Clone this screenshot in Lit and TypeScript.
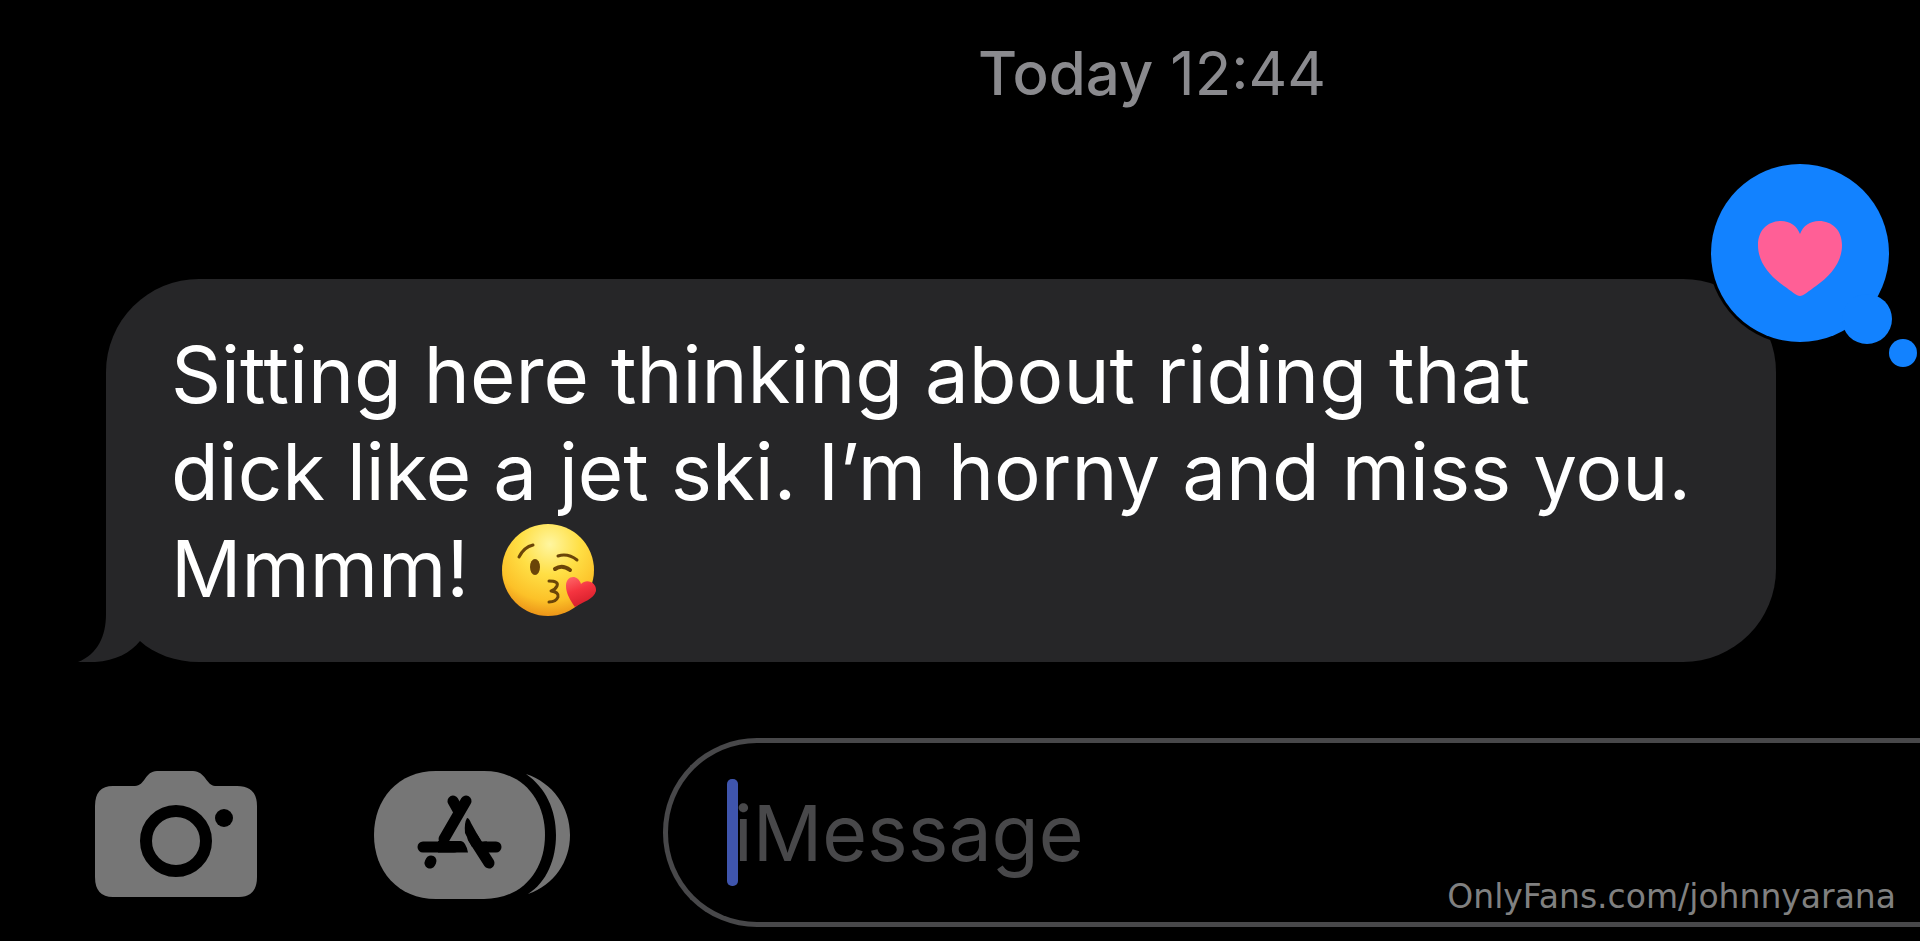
import { LitElement, html, css, svg } from "lit";
import { customElement, property } from "lit/decorators.js";

const kissFace = svg`
  <defs>
    <radialGradient id="skin" cx="52%" cy="22%" r="82%">
      <stop offset="0" stop-color="#fff6a0" />
      <stop offset="0.4" stop-color="#ffdf45" />
      <stop offset="0.75" stop-color="#fcc128" />
      <stop offset="1" stop-color="#e88a14" />
    </radialGradient>
    <linearGradient id="love" x1="0" y1="0" x2="0.4" y2="1">
      <stop offset="0" stop-color="#ff6a6a" />
      <stop offset="0.5" stop-color="#f5343f" />
      <stop offset="1" stop-color="#d81f2c" />
    </linearGradient>
  </defs>
  <circle cx="47" cy="47" r="46" fill="url(#skin)" />
  <g fill="none" stroke="#6b4508" stroke-width="3" stroke-linecap="round" stroke-linejoin="round">
    <path d="M18 34 Q23 24 32 22" />
    <path d="M57 33 Q67 30 76 37" />
    <path stroke-width="4" d="M54 46 Q61 41 69 47" />
    <path d="M48 58 Q58 58 56 63 Q54 67 50 68 Q58 69 57 74 Q55 79 48 79" />
  </g>
  <ellipse cx="34" cy="44" rx="5" ry="8" fill="#6b4508" />
  <path fill="url(#love)" d="M74 84C69 77 65 70 65 63C65 52 77 51 80 61C86 55 96 60 95 68C93 76 82 79 74 84Z" />
`;

@customElement("message-bubble")
export class MessageBubble extends LitElement {
  @property() text = "";

  static styles = css`
    :host {
      display: block;
      position: relative;
      background: #262628;
      border-radius: 93px 93px 93px 0;
      padding: 47px 80px 45px 65px;
    }
    .text {
      margin: 0;
      color: #fff;
      font: 400 78px/97px Inter, "Liberation Sans", sans-serif;
    }
    .emoji {
      display: inline-block;
      width: 96px;
      height: 94px;
      margin-left: 10px;
      vertical-align: -20px;
    }
    .tail {
      position: absolute;
      left: -28px;
      bottom: 0;
      width: 128px;
      height: 60px;
    }
    .reaction {
      position: absolute;
      right: -144px;
      top: -120px;
      width: 214px;
      height: 214px;
    }
  `;

  render() {
    return html`
      <p class="text">${this.text}
        <svg class="emoji" viewBox="0 0 96 94" role="img" aria-label="😘">${kissFace}</svg></p>
      <svg class="tail" viewBox="0 0 128 60" aria-hidden="true">
        <path fill="#000" d="M0 0H128V60H0Z" />
        <path fill="#262628" d="M28 0H128V60H121C98 60 76 52 62 39C50 54 30 62 0 60C20 52 28 34 28 12Z" />
      </svg>
      <svg class="reaction" viewBox="0 0 214 214" role="img" aria-label="Loved">
        <circle cx="94" cy="94" r="92" fill="#000" />
        <g fill="#1282ff">
          <circle cx="94" cy="94" r="89" />
          <circle cx="161" cy="160" r="25" />
          <circle cx="197" cy="194" r="14" />
        </g>
        <path
          fill="#ff5f96"
          d="M94 137C91 137 85 132 78 127C64 117 52 104 52 86C52 71 62 62 75 62C84 62 91 67 94 75C97 67 104 62 113 62C126 62 136 71 136 86C136 104 124 117 110 127C103 132 97 137 94 137Z"
        />
      </svg>
    `;
  }
}

@customElement("message-composer")
export class MessageComposer extends LitElement {
  static styles = css`
    :host {
      display: flex;
      align-items: center;
      padding-left: 95px;
    }
    .tool {
      flex: none;
      padding: 4px 0 0;
      border: 0;
      background: none;
      line-height: 0;
    }
    .camera {
      width: 162px;
      margin-right: 117px;
    }
    .apps {
      width: 197px;
      margin-right: 92px;
    }
    .field {
      flex: 1;
      min-width: 0;
      position: relative;
    }
    .input {
      display: block;
      box-sizing: border-box;
      width: 100%;
      height: 189px;
      padding: 0 0 0 66px;
      border: 5px solid #48484a;
      border-right: 0;
      border-radius: 94px 0 0 94px;
      background: transparent;
      color: #fff;
      outline: none;
      font: 400 77px/97px Inter, "Liberation Sans", sans-serif;
    }
    .input::placeholder {
      color: #48484a;
      opacity: 1;
    }
    .caret {
      position: absolute;
      left: 64px;
      top: 41px;
      width: 11px;
      height: 107px;
      border-radius: 5px;
      background: #3f55ad;
    }
  `;

  render() {
    return html`
      <button class="tool camera" type="button" aria-label="Camera">
        <svg width="162" height="128" viewBox="0 0 162 128">
          <path
            fill="#767676"
            d="M18 15H40C50 15 50 0 62 0H98C110 0 112 15 120 15H142Q162 15 162 35V106Q162 126 144 126H18Q0 126 0 106V35Q0 15 18 15Z"
          />
          <circle cx="81" cy="70" r="30" fill="none" stroke="#000" stroke-width="12" />
          <circle cx="129" cy="47" r="9" fill="#000" />
        </svg>
      </button>
      <button class="tool apps" type="button" aria-label="Apps">
        <svg width="197" height="128" viewBox="0 0 197 128">
          <path
            fill="#767676"
            d="M62 0H110C148 0 171 28 171 64S148 128 110 128H62C24 128 0 100 0 64S24 0 62 0Z"
          />
          <path fill="#767676" d="M152 3C179 12 196 36 196 64C196 91 180 114 154 123C173 111 182 88 182 64C182 39 172 17 152 3Z" />
          <g fill="none" stroke="#000" stroke-width="11" stroke-linecap="round">
            <path d="M92 30L70 68" />
            <path d="M79 30L84 39" />
            <path d="M49 76H80" />
            <path d="M111 76H122" />
            <path d="M57 90L56 92" />
            <path d="M99 67L115 92" />
          </g>
          <path fill="#000" d="M64 70H87Q92 71 94 81.500H64ZM93 47Q95 47 97 52L107 70L98 76L91 62Q90 52 93 47ZM104 70.500H113V81.500H108Z" />
        </svg>
      </button>
      <div class="field">
        <input class="input" type="text" placeholder="iMessage" aria-label="iMessage" />
        <span class="caret"></span>
      </div>
    `;
  }
}

@customElement("app-root")
export class AppRoot extends LitElement {
  static styles = css`
    :host {
      display: block;
      background: #000;
    }
    .screen {
      position: relative;
      box-sizing: border-box;
      display: flex;
      flex-direction: column;
      min-height: 100vh;
      overflow: hidden;
      padding-bottom: 14px;
      font-family: Inter, "Liberation Sans", sans-serif;
    }
    .stamp {
      margin: 0;
      padding: 37px 0 0 20%;
      text-align: center;
      font-size: 60px;
      line-height: 72px;
      color: #8a8a8e;
    }
    .day {
      font-weight: 500;
    }
    .bubble {
      margin: 170px 144px 0 106px;
    }
    .composer {
      margin-top: auto;
    }
    .credit {
      position: absolute;
      right: 24px;
      bottom: 23px;
      color: #808080;
      font: 33px/42px "DejaVu Sans", sans-serif;
      text-decoration: none;
    }
  `;

  render() {
    return html`
      <main class="screen">
        <p class="stamp"><span class="day">Today</span> <time>12:44</time></p>
        <message-bubble
          class="bubble"
          text="Sitting here thinking about riding that dick like a jet ski. I’m horny and miss you. Mmmm!"
        ></message-bubble>
        <message-composer class="composer"></message-composer>
        <a class="credit" href="#">OnlyFans.com/johnnyarana</a>
      </main>
    `;
  }
}
